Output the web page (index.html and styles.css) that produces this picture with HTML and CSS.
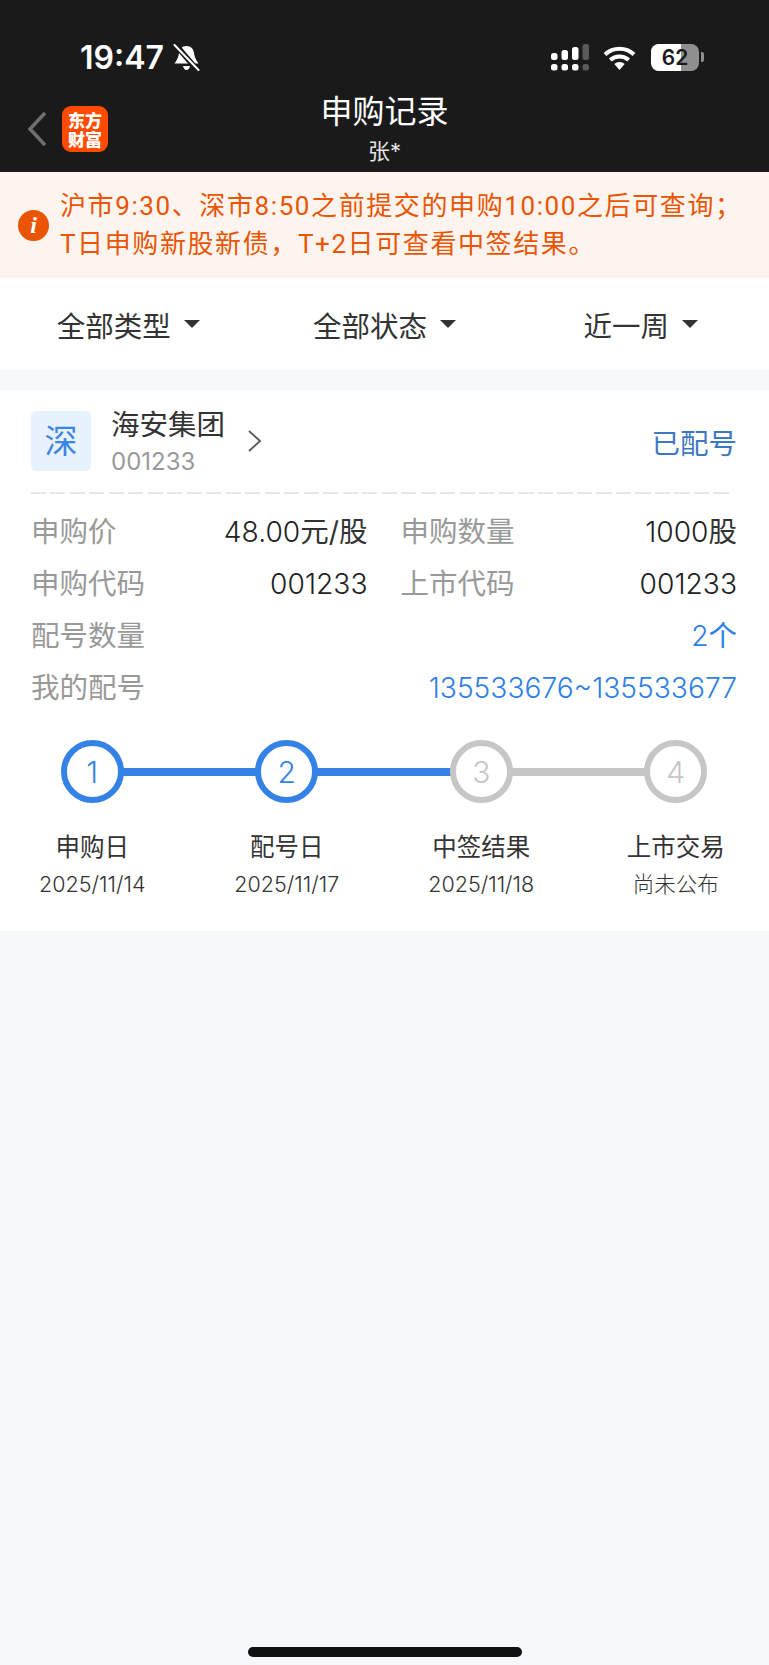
FILE: index.html
```html
<!DOCTYPE html>
<html lang="zh-CN">
<head>
    <meta charset="UTF-8">
    <title>申购记录</title>
    <link rel="stylesheet" href="styles.css">
</head>
<body>
    <div class="page">
        <header class="topbar">
            <div class="status-bar">
                <div class="status-left">
                    <span class="clock">19:47</span>
                    <svg class="bell" width="27" height="27" viewBox="0 0 27 27">
                        <path d="M13.500 2c-4.500 0-7 3-7.500 7-.5 4-2 7-4.500 10.500h24c-2.500-3.500-4-6.500-4.500-10.500-.5-4-3-7-7.500-7z" fill="#fff"/>
                        <path d="M10 22h7c-.5 2.500-2 4-3.500 4S10.500 24.500 10 22z" fill="#fff"/>
                        <path d="M2 0l23 27" stroke="#1a1a1a" stroke-width="5.500"/>
                        <path d="M1.500 1l24 25" stroke="#fff" stroke-width="2" stroke-linecap="round"/>
                    </svg>
                </div>
                <div class="status-right">
                    <svg class="signal" width="38" height="27" viewBox="0 0 38 27">
                        <rect x="0" y="20" width="6.500" height="6.500" rx="2.500" fill="#fff"/>
                        <rect x="10.500" y="20" width="6.500" height="6.500" rx="2.500" fill="#fff"/>
                        <rect x="21" y="20" width="6.500" height="6.500" rx="2.500" fill="#fff"/>
                        <rect x="31.500" y="20" width="6.500" height="6.500" rx="2.500" fill="#5a5a5a"/>
                        <rect x="0" y="9" width="6.500" height="7" rx="2.500" fill="#fff"/>
                        <rect x="10.500" y="6" width="6.500" height="10" rx="2.500" fill="#fff"/>
                        <rect x="21" y="3" width="6.500" height="13" rx="2.500" fill="#fff"/>
                        <rect x="31.500" y="0" width="6.500" height="16" rx="2.500" fill="#5a5a5a"/>
                    </svg>
                    <svg class="wifi" width="33" height="25" viewBox="0 0 33 25">
                        <path d="M16.500 25l-5.200-6a7.500 7.500 0 0 1 10.400 0z" fill="#fff"/>
                        <path d="M2 9.500a21 21 0 0 1 29 0M7.300 15a13.500 13.500 0 0 1 18.400 0" fill="none" stroke="#fff" stroke-width="4"/>
                    </svg>
                    <div class="battery">
                        <div class="battery-body"><span class="battery-fill"></span><span class="battery-num">62</span></div>
                        <span class="battery-cap"></span>
                    </div>
                </div>
            </div>
            <div class="navbar">
                <div class="nav-left">
                    <svg class="back" width="22" height="38" viewBox="0 0 22 38">
                        <path d="M19 3L4 19l15 16" fill="none" stroke="#707070" stroke-width="3.500"/>
                    </svg>
                    <div class="logo">东方<br>财富</div>
                </div>
                <div class="nav-title">
                    <h1>申购记录</h1>
                    <p>张*</p>
                </div>
            </div>
        </header>

        <div class="notice">
            <span class="notice-icon">i</span>
            <p>沪市9:30、深市8:50之前提交的申购10:00之后可查询；<br>T日申购新股新债，T+2日可查看中签结果。</p>
        </div>

        <div class="filters">
            <div class="filter">全部类型<span class="caret"></span></div>
            <div class="filter">全部状态<span class="caret"></span></div>
            <div class="filter">近一周<span class="caret"></span></div>
        </div>

        <section class="card">
            <div class="card-head">
                <div class="market">深</div>
                <div class="stock">
                    <div class="stock-name">海安集团</div>
                    <div class="stock-code">001233</div>
                </div>
                <svg class="chevron" width="16" height="26" viewBox="0 0 16 26">
                    <path d="M2 3l11 10L2 23" fill="none" stroke="#555" stroke-width="1.800"/>
                </svg>
                <div class="state">已配号</div>
            </div>

            <div class="info">
                <div class="info-row">
                    <div class="pair"><span class="label">申购价</span><span class="value">48.00<span class="unit">元/股</span></span></div>
                    <div class="pair"><span class="label">申购数量</span><span class="value">1000<span class="unit">股</span></span></div>
                </div>
                <div class="info-row">
                    <div class="pair"><span class="label">申购代码</span><span class="value">001233</span></div>
                    <div class="pair"><span class="label">上市代码</span><span class="value">001233</span></div>
                </div>
                <div class="pair"><span class="label">配号数量</span><span class="value link">2<span class="unit">个</span></span></div>
                <div class="pair"><span class="label">我的配号</span><span class="value link">135533676~135533677</span></div>
            </div>

            <div class="steps">
                <div class="step done">
                    <div class="dot">1</div>
                    <div class="step-name">申购日</div>
                    <div class="step-date">2025/11/14</div>
                </div>
                <div class="step done">
                    <div class="dot">2</div>
                    <div class="step-name">配号日</div>
                    <div class="step-date">2025/11/17</div>
                </div>
                <div class="step">
                    <div class="dot">3</div>
                    <div class="step-name">中签结果</div>
                    <div class="step-date">2025/11/18</div>
                </div>
                <div class="step">
                    <div class="dot">4</div>
                    <div class="step-name">上市交易</div>
                    <div class="step-date">尚未公布</div>
                </div>
            </div>
        </section>

        <div class="home-bar"></div>
    </div>
</body>
</html>
```

FILE: styles.css
```css
* {
    box-sizing: border-box;
}
body {
    margin: 0;
    background-color: #f7f8fa;
    font-family: "Inter", "Noto Sans CJK SC", sans-serif;
}
.page {
    width: 769px;
    height: 1665px;
    display: flex;
    flex-direction: column;
    position: relative;
    overflow: hidden;
}

/* top bar */
.topbar {
    background-color: #1a1a1a;
    height: 172px;
    color: #fff;
    flex-shrink: 0;
}
.status-bar {
    display: flex;
    justify-content: space-between;
    align-items: center;
    padding: 38px 65px 0 80px;
    height: 76px;
}
.status-left, .status-right {
    display: flex;
    align-items: center;
}
.clock {
    font-size: 32px;
    font-weight: 600;
}
.bell {
    margin-left: 9px;
}
.wifi {
    margin-left: 14px;
}
.battery {
    display: flex;
    align-items: center;
    margin-left: 15px;
}
.battery-body {
    width: 48px;
    height: 27px;
    border-radius: 8px;
    background-color: #8f8f8f;
    position: relative;
    overflow: hidden;
    text-align: center;
}
.battery-fill {
    position: absolute;
    left: 0;
    top: 0;
    bottom: 0;
    width: 62%;
    background-color: #fff;
}
.battery-num {
    position: relative;
    color: #1a1a1a;
    font-size: 21px;
    font-weight: 600;
    line-height: 27px;
}
.battery-cap {
    width: 3px;
    height: 10px;
    margin-left: 2px;
    border-radius: 0 2px 2px 0;
    background-color: #8f8f8f;
}
.navbar {
    height: 96px;
    position: relative;
}
.nav-left {
    display: flex;
    align-items: center;
    padding: 30px 0 0 26px;
}
.logo {
    width: 46px;
    height: 46px;
    margin-left: 14px;
    border-radius: 9px;
    background-color: #ff4a00;
    color: #fff;
    font-family: "Noto Sans CJK SC", sans-serif;
    font-size: 17px;
    font-weight: 900;
    line-height: 19px;
    text-align: center;
    padding-top: 4px;
}
.nav-title {
    position: absolute;
    left: 0;
    right: 0;
    top: 16px;
    text-align: center;
}
.nav-title h1 {
    margin: 0;
    font-size: 32px;
    font-weight: 400;
    line-height: 40px;
}
.nav-title p {
    margin: 6px 0 0;
    font-size: 22px;
    line-height: 26px;
    color: #e4e4e4;
}

/* notice */
.notice {
    height: 106px;
    background-color: #fef4ef;
    display: flex;
    align-items: center;
    padding-left: 18px;
    flex-shrink: 0;
}
.notice-icon {
    width: 31px;
    height: 31px;
    border-radius: 50%;
    background-color: #ea5504;
    color: #fff;
    font-family: "Liberation Serif", serif;
    font-size: 24px;
    font-weight: 700;
    font-style: italic;
    line-height: 31px;
    text-align: center;
    flex-shrink: 0;
}
.notice p {
    margin: 0 0 0 11px;
    color: #ea5504;
    font-family: "Roboto", "Noto Sans CJK SC", sans-serif;
    font-size: 26px;
    letter-spacing: 1.600px;
    line-height: 38px;
    white-space: nowrap;
}

/* filter row */
.filters {
    height: 92px;
    background-color: #fff;
    display: flex;
    align-items: center;
    flex-shrink: 0;
}
.filter {
    flex: 1;
    display: flex;
    align-items: center;
    justify-content: center;
    color: #333;
    font-size: 28.500px;
}
.caret {
    width: 0;
    height: 0;
    margin-left: 13px;
    border-left: 8px solid transparent;
    border-right: 8px solid transparent;
    border-top: 8px solid #333;
}

/* record card */
.card {
    margin-top: 20px;
    background-color: #fff;
    height: 541px;
    padding: 21px 32px 0 31px;
    flex-shrink: 0;
}
.card-head {
    display: flex;
    align-items: center;
    height: 60px;
}
.market {
    width: 60px;
    height: 60px;
    border-radius: 5px;
    background-color: #e8f2fd;
    color: #3b86e4;
    font-size: 33px;
    line-height: 60px;
    text-align: center;
}
.stock {
    margin: 2px 0 0 20px;
}
.stock-name {
    color: #333;
    font-size: 28.500px;
    line-height: 34px;
}
.stock-code {
    margin-top: 5px;
    color: #999;
    font-size: 24px;
    line-height: 30px;
}
.chevron {
    margin-left: 22px;
}
.state {
    margin-left: auto;
    color: #3f78c2;
    font-size: 28.500px;
}

/* the dashed rule is a gradient so the dash length can be set */
.info {
    margin-top: 21px;
    padding-top: 14px;
    background-image: repeating-linear-gradient(90deg, #e6e6e6 0, #e6e6e6 15px, transparent 15px, transparent 19.500px);
    background-size: 702px 2px;
    background-repeat: no-repeat;
}
.info-row {
    display: flex;
    gap: 33px;
}
.info-row .pair {
    flex: 1;
}
.pair {
    display: flex;
    justify-content: space-between;
    height: 52px;
    line-height: 52px;
    font-size: 28.500px;
}
.label {
    color: #999;
}
.value {
    color: #222;
    font-size: 28.200px;
    font-weight: 300;
}
.unit {
    font-size: 28.500px;
    font-weight: 400;
    color: #333;
}
.link, .link .unit {
    color: #2f80e6;
}

/* progress steps */
.steps {
    display: flex;
    margin: 26px -36px 0 -36px;
}
.step {
    flex: none;
    width: 194.500px;
    display: flex;
    flex-direction: column;
    align-items: center;
    position: relative;
}
.step::after {
    content: "";
    position: absolute;
    left: 50%;
    top: 28px;
    width: 100%;
    height: 8px;
    background-color: #c6c6c6;
}
.step:last-child::after {
    display: none;
}
.step.done::after {
    background-color: #3582e6;
}
.dot {
    width: 63px;
    height: 63px;
    border-radius: 50%;
    border: 6px solid #c6c6c6;
    background-color: #fff;
    color: #c6c6c6;
    font-size: 30px;
    font-weight: 300;
    line-height: 52px;
    text-align: center;
    position: relative;
    z-index: 1;
}
.step.done .dot {
    border-color: #3582e6;
    color: #3582e6;
}
.step-name {
    margin-top: 28px;
    color: #333;
    font-size: 24.500px;
    line-height: 32px;
}
.step-date {
    margin-top: 7px;
    color: #333;
    font-size: 21.500px;
    font-weight: 300;
    line-height: 28px;
}

.home-bar {
    position: absolute;
    left: 248px;
    bottom: 8px;
    width: 274px;
    height: 10px;
    border-radius: 5px;
    background-color: #111;
}
```
